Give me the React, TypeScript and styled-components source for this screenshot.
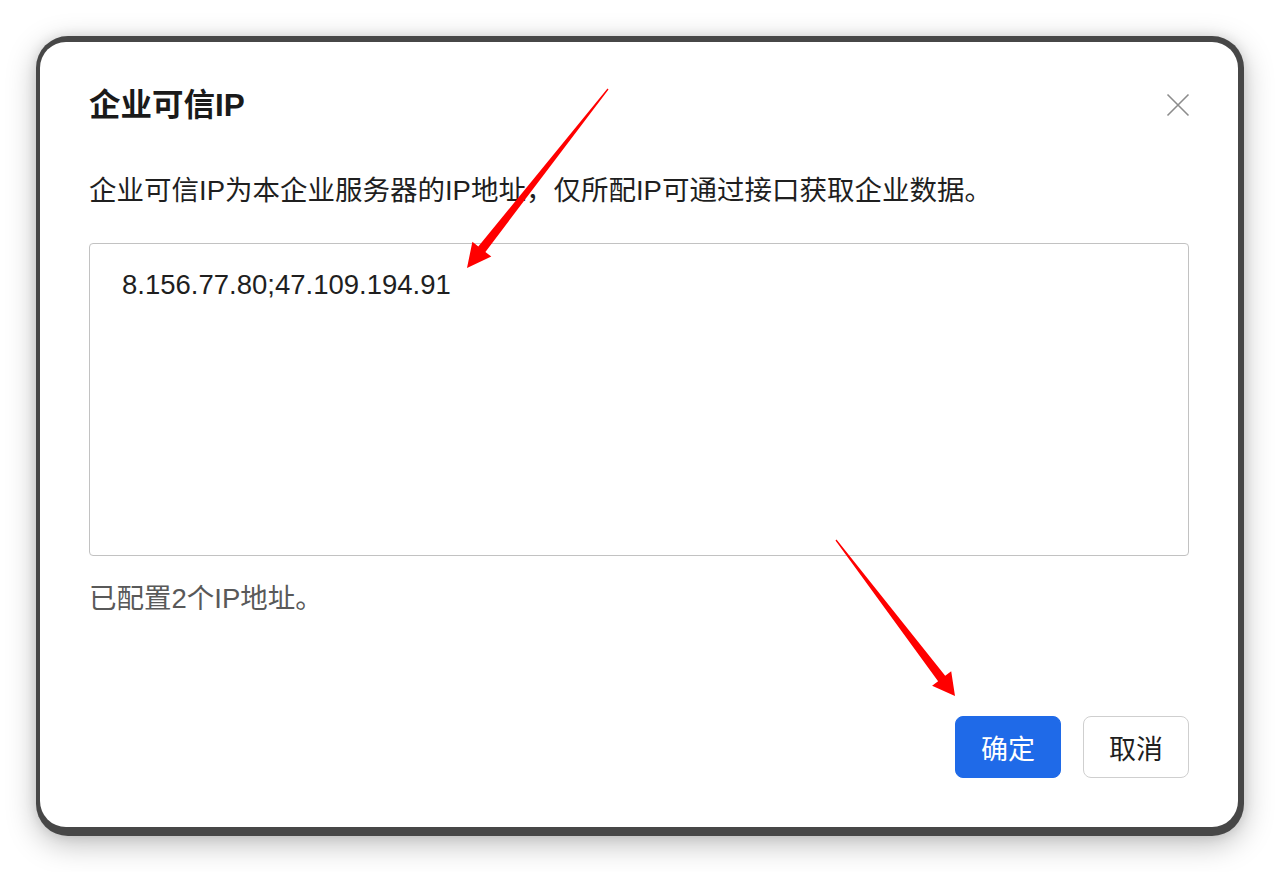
import React from "react";
import styled, { createGlobalStyle } from "styled-components";

const Global = createGlobalStyle`
  html, body { margin: 0; padding: 0; background: #ffffff; }
  body { font-family: "Liberation Sans", "Noto Sans CJK SC", sans-serif; }
  * { box-sizing: border-box; }
`;

const Page = styled.div`
  position: relative;
  width: 1280px;
  height: 872px;
  padding: 36px;
  overflow: hidden;
  background: #fff;
`;

const Frame = styled.div`
  height: 800px;
  background: #474747;
  border-radius: 32px;
  padding: 6px 6px 9px 4px;
  box-shadow: 0 8px 30px rgba(0, 0, 0, 0.26), 0 0 12px rgba(0, 0, 0, 0.1);
`;

const Dialog = styled.div`
  height: 100%;
  background: #fff;
  border-radius: 26px;
  padding: 41px 49px 49px 49px;
  display: flex;
  flex-direction: column;
`;

const Header = styled.div`
  display: flex;
  align-items: center;
  justify-content: space-between;
  height: 44px;
`;

const Title = styled.h1`
  margin: 0;
  font-size: 31.5px;
  line-height: 44px;
  font-weight: 700;
  color: #1a1a1a;
`;

const CloseButton = styled.button`
  width: 26px;
  height: 26px;
  padding: 0;
  border: none;
  background: transparent;
  display: flex;
  align-items: center;
  justify-content: center;
  margin-right: -2px;
`;

const Description = styled.p`
  margin: 46px 0 0 0;
  font-size: 27.5px;
  line-height: 36px;
  color: #1f1f1f;
`;

const IpInput = styled.textarea`
  display: block;
  margin-top: 34px;
  width: 100%;
  height: 313px;
  border: 1.5px solid #c2c2c2;
  border-radius: 4px;
  padding: 23px 32px;
  font-family: "Liberation Sans", "Noto Sans CJK SC", sans-serif;
  font-size: 27.5px;
  line-height: 36px;
  color: #1f1f1f;
  resize: none;
  outline: none;
  background: #fff;
`;

const Helper = styled.p`
  margin: 25px 0 0 0;
  font-size: 27.5px;
  line-height: 36px;
  color: #595959;
`;

const Footer = styled.div`
  margin-top: auto;
  display: flex;
  justify-content: flex-end;
  gap: 22px;
`;

const Button = styled.button<{ $primary?: boolean }>`
  width: 106px;
  height: 62px;
  border-radius: 8px;
  font-family: "Liberation Sans", "Noto Sans CJK SC", sans-serif;
  font-size: 27px;
  padding: 0;
  background: ${(p) => (p.$primary ? "#1f6ae8" : "#ffffff")};
  color: ${(p) => (p.$primary ? "#ffffff" : "#1f1f1f")};
  border: ${(p) => (p.$primary ? "1.5px solid #1f6ae8" : "1.5px solid #cfcfcf")};
`;

const Overlay = styled.svg`
  position: absolute;
  left: 0;
  top: 0;
  pointer-events: none;
`;

type Pt = [number, number];

function arrowPoints(
  t: Pt,
  h: Pt,
  headLen: number,
  headHalf: number,
  neckHalf: number,
  tailHalf: number
): string {
  const dx = h[0] - t[0];
  const dy = h[1] - t[1];
  const L = Math.hypot(dx, dy);
  const ux = dx / L;
  const uy = dy / L;
  const nx = -uy;
  const ny = ux;
  const bx = h[0] - ux * headLen;
  const by = h[1] - uy * headLen;
  const pts: Pt[] = [
    [t[0] + nx * tailHalf, t[1] + ny * tailHalf],
    [bx + nx * neckHalf, by + ny * neckHalf],
    [bx + nx * headHalf, by + ny * headHalf],
    h,
    [bx - nx * headHalf, by - ny * headHalf],
    [bx - nx * neckHalf, by - ny * neckHalf],
    [t[0] - nx * tailHalf, t[1] - ny * tailHalf],
  ];
  return pts.map((p) => `${p[0].toFixed(1)},${p[1].toFixed(1)}`).join(" ");
}

export default function App() {
  return (
    <>
      <Global />
      <Page>
        <Frame>
          <Dialog>
            <Header>
              <Title>企业可信IP</Title>
              <CloseButton aria-label="关闭">
                <svg width="24" height="24" viewBox="0 0 24 24">
                  <path
                    d="M1.5 1.5 L22.5 22.5 M22.5 1.5 L1.5 22.5"
                    stroke="#8c8c8c"
                    strokeWidth="1.6"
                    fill="none"
                  />
                </svg>
              </CloseButton>
            </Header>
            <Description>
              企业可信IP为本企业服务器的IP地址，仅所配IP可通过接口获取企业数据。
            </Description>
            <IpInput readOnly defaultValue="8.156.77.80;47.109.194.91" />
            <Helper>已配置2个IP地址。</Helper>
            <Footer>
              <Button $primary>确定</Button>
              <Button>取消</Button>
            </Footer>
          </Dialog>
        </Frame>
        <Overlay width="1280" height="872" viewBox="0 0 1280 872">
          <polygon
            points={arrowPoints([608, 89], [467, 268], 24, 12, 4.5, 0.6)}
            fill="#ff0000"
          />
          <polygon
            points={arrowPoints([836, 540], [955, 696], 22, 12, 4.5, 0.6)}
            fill="#ff0000"
          />
        </Overlay>
      </Page>
    </>
  );
}
